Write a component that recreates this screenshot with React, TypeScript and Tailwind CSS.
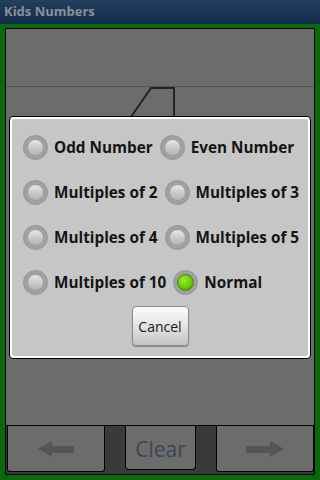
import React from "react";

const rows: [string, string, boolean][] = [
  ["Odd Number", "Even Number", false],
  ["Multiples of 2", "Multiples of 3", false],
  ["Multiples of 4", "Multiples of 5", false],
  ["Multiples of 10", "Normal", true],
];

function Radio({ checked }: { checked?: boolean }) {
  return (
    <div className="w-[25px] h-[25px] rounded-full bg-[radial-gradient(circle,#a4a4a4_50%,#8a8a8a_100%)] flex items-center justify-center shrink-0">
      <div
        className={
          checked
            ? "w-[17px] h-[17px] rounded-full bg-[radial-gradient(circle_at_40%_35%,#9eef2a_0%,#62c400_60%,#3f8f00_100%)] border border-[#4a7a10]"
            : "w-[17px] h-[17px] rounded-full bg-[linear-gradient(180deg,#e8e8e8_0%,#c8c8c8_55%,#b4b4b4_100%)] border border-[#9a9a9a]"
        }
      />
    </div>
  );
}

function Option({ label, checked }: { label: string; checked?: boolean }) {
  return (
    <div className="flex items-center gap-[6px]">
      <Radio checked={checked} />
      <span className="text-[15.3px] font-bold text-[#141414] leading-none whitespace-nowrap">{label}</span>
    </div>
  );
}

export default function App() {
  return (
    <div
      className="w-[320px] h-[480px] relative overflow-hidden bg-[#0a6a0a] flex flex-col"
      style={{ fontFamily: '"Open Sans", "DejaVu Sans", sans-serif' }}
    >
      {/* title bar */}
      <div className="h-[24px] bg-[linear-gradient(180deg,#243e5e_0%,#142c4a_100%)] flex items-center px-[4px] shrink-0">
        <span className="text-[13px] font-bold text-[#8b9097]">Kids Numbers</span>
      </div>

      {/* green frame */}
      <div className="flex-1 px-[5px] pt-[4px] pb-[5px] flex">
        <div className="flex-1 border border-black bg-[#6c6c6c] flex flex-col">
          {/* drawing area */}
          <div className="flex-1 relative">
            <div className="h-[58px] border-b border-[#545454]" />
            <svg className="absolute left-0 top-0" width="310" height="120" viewBox="0 0 310 120">
              <path d="M125 88 L145 59 L168 59 L168 120" fill="none" stroke="#1c2a1c" strokeWidth="2" />
            </svg>
          </div>
          {/* button bar */}
          <div className="h-[49px] border-t border-black bg-[#3a3a3a] flex justify-between pb-[2px] pl-[1px]">
            <div className="w-[98px] border border-black border-t-0 rounded-b-[3px] bg-[#6c6c6c] flex items-center justify-center">
              <svg width="40" height="20" viewBox="0 0 40 20">
                <path d="M2 10 L16 2 L16 7 L38 7 L38 14 L16 14 L16 18 Z" fill="#555555" />
              </svg>
            </div>
            <div className="w-[71px] mb-[2px] border border-black border-t-0 rounded-b-[4px] bg-[#6c6c6c] flex items-center justify-center pt-[3px]">
              <span className="text-[21px] text-[#3c4555] leading-none">Clear</span>
            </div>
            <div className="w-[98px] border border-black border-t-0 rounded-b-[3px] bg-[#6c6c6c] flex items-center justify-center">
              <svg width="42" height="20" viewBox="0 0 42 20">
                <path d="M40 10 L26 2 L26 7 L2 7 L2 14 L26 14 L26 18 Z" fill="#555555" />
              </svg>
            </div>
          </div>
        </div>
      </div>

      {/* dialog */}
      <div className="absolute left-[9px] top-[116px] w-[302px] h-[243px] rounded-[4px] border border-black bg-white p-[2px]">
        <div className="w-full h-full rounded-[2px] bg-[#c6c6c6] flex flex-col items-center pt-[16px]">
          <div className="flex flex-col gap-[20px] self-start pl-[11px]">
            {rows.map(([a, b, c]) => (
              <div key={a} className="flex items-center gap-[7px]">
                <Option label={a} />
                <Option label={b} checked={c} />
              </div>
            ))}
          </div>
          <button className="mt-[11px] w-[57px] h-[40px] rounded-[4px] border border-[#8a8a8a] bg-[linear-gradient(180deg,#fbfbfb_0%,#e4e4e4_50%,#c4c4c4_100%)] text-[14px] text-[#1a1a1a] shadow-[0_1px_1px_rgba(0,0,0,0.3)]">
            Cancel
          </button>
        </div>
      </div>
    </div>
  );
}
